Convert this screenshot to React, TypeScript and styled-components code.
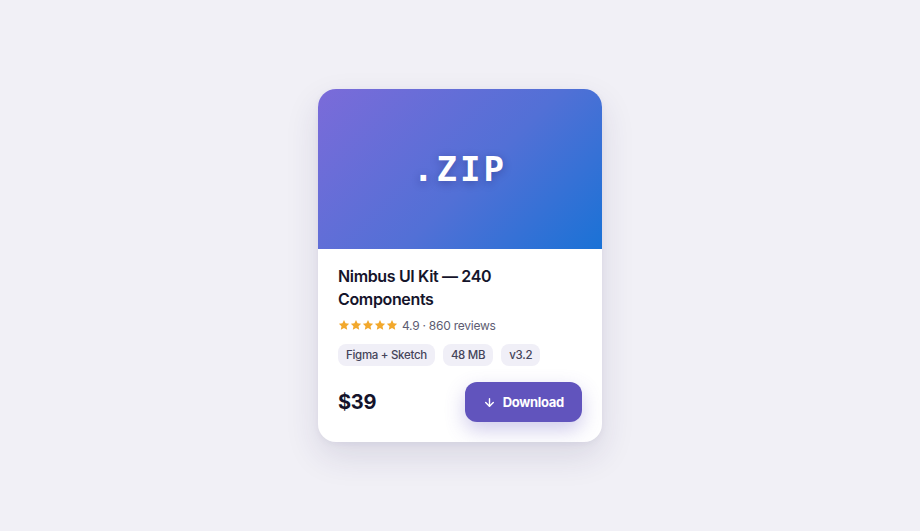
import React from 'react';
import styled, { createGlobalStyle } from 'styled-components';
import { ArrowDown } from 'lucide-react';

const GlobalStyle = createGlobalStyle`
  html, body {
    margin: 0;
    padding: 0;
    background: #f1f0f6;
  }
  * {
    box-sizing: border-box;
  }
`;

const tags = ['Figma + Sketch', '48 MB', 'v3.2'];

const Star = () => (
  <svg width="12" height="12" viewBox="0 0 24 24">
    <path
      d="M12 1.8l3.1 6.6 7.2.9-5.3 5 1.4 7.1L12 17.9l-6.4 3.5L7 14.3l-5.3-5 7.2-.9z"
      fill="#f2a82c"
    />
  </svg>
);

const App = () => {
  return (
    <Page>
      <GlobalStyle />
      <Card>
        <Cover>
          <CoverLabel>.ZIP</CoverLabel>
        </Cover>
        <Body>
          <Title>Nimbus UI Kit — 240 Components</Title>
          <RatingRow>
            <Stars>
              {[0, 1, 2, 3, 4].map((i) => (
                <Star key={i} />
              ))}
            </Stars>
            <RatingText>4.9 · 860 reviews</RatingText>
          </RatingRow>
          <TagRow>
            {tags.map((t) => (
              <Tag key={t}>{t}</Tag>
            ))}
          </TagRow>
          <Footer>
            <Price>$39</Price>
            <DownloadButton>
              <ArrowDown size={13} strokeWidth={2.6} />
              Download
            </DownloadButton>
          </Footer>
        </Body>
      </Card>
    </Page>
  );
};

export default App;

const Page = styled.div`
  display: flex;
  align-items: center;
  justify-content: center;
  min-height: 100vh;
  font-family: Inter, 'Noto Sans', sans-serif;
`;

const Card = styled.div`
  width: 284px;
  background: #ffffff;
  border-radius: 18px;
  overflow: hidden;
  box-shadow: 0 14px 34px rgba(40, 30, 90, 0.12), 0 2px 6px rgba(40, 30, 90, 0.05);
`;

const Cover = styled.div`
  height: 160px;
  display: flex;
  align-items: center;
  justify-content: center;
  background: linear-gradient(135deg, #7b6bd9 0%, #5270d6 55%, #1a72d6 100%);
`;

const CoverLabel = styled.div`
  font-family: 'DejaVu Sans Mono', 'Liberation Mono', monospace;
  font-weight: 700;
  font-size: 34px;
  letter-spacing: 3px;
  color: #ffffff;
  text-shadow: 0 2px 8px rgba(20, 20, 80, 0.35);
`;

const Body = styled.div`
  padding: 16px 20px 20px;
  display: flex;
  flex-direction: column;
`;

const Title = styled.h2`
  margin: 0;
  font-size: 16px;
  line-height: 23px;
  font-weight: 600;
  letter-spacing: -0.35px;
  color: #15142b;
  padding-right: 60px;
`;

const RatingRow = styled.div`
  display: flex;
  align-items: center;
  gap: 4px;
  height: 14px;
  margin-top: 7px;
`;

const Stars = styled.div`
  display: flex;
  gap: 0;
`;

const RatingText = styled.span`
  font-size: 12px;
  letter-spacing: -0.25px;
  color: #5d5c72;
`;

const TagRow = styled.div`
  display: flex;
  gap: 8px;
  margin-top: 12px;
`;

const Tag = styled.span`
  height: 22px;
  display: inline-flex;
  align-items: center;
  padding: 0 8px;
  border-radius: 8px;
  background: #f0eff7;
  font-size: 11.5px;
  font-weight: 500;
  letter-spacing: -0.3px;
  color: #45445a;
`;

const Footer = styled.div`
  display: flex;
  align-items: center;
  justify-content: space-between;
  margin-top: 16px;
`;

const Price = styled.div`
  font-size: 20px;
  font-weight: 700;
  letter-spacing: -0.3px;
  color: #15142b;
`;

const DownloadButton = styled.button`
  display: inline-flex;
  align-items: center;
  gap: 7px;
  height: 40px;
  padding: 0 18px;
  border: none;
  border-radius: 12px;
  background: #6154bd;
  color: #ffffff;
  font-family: Inter, 'Noto Sans', sans-serif;
  font-size: 13px;
  font-weight: 700;
  letter-spacing: -0.3px;
  box-shadow: 0 8px 20px rgba(97, 84, 189, 0.3);
  cursor: pointer;
`;
